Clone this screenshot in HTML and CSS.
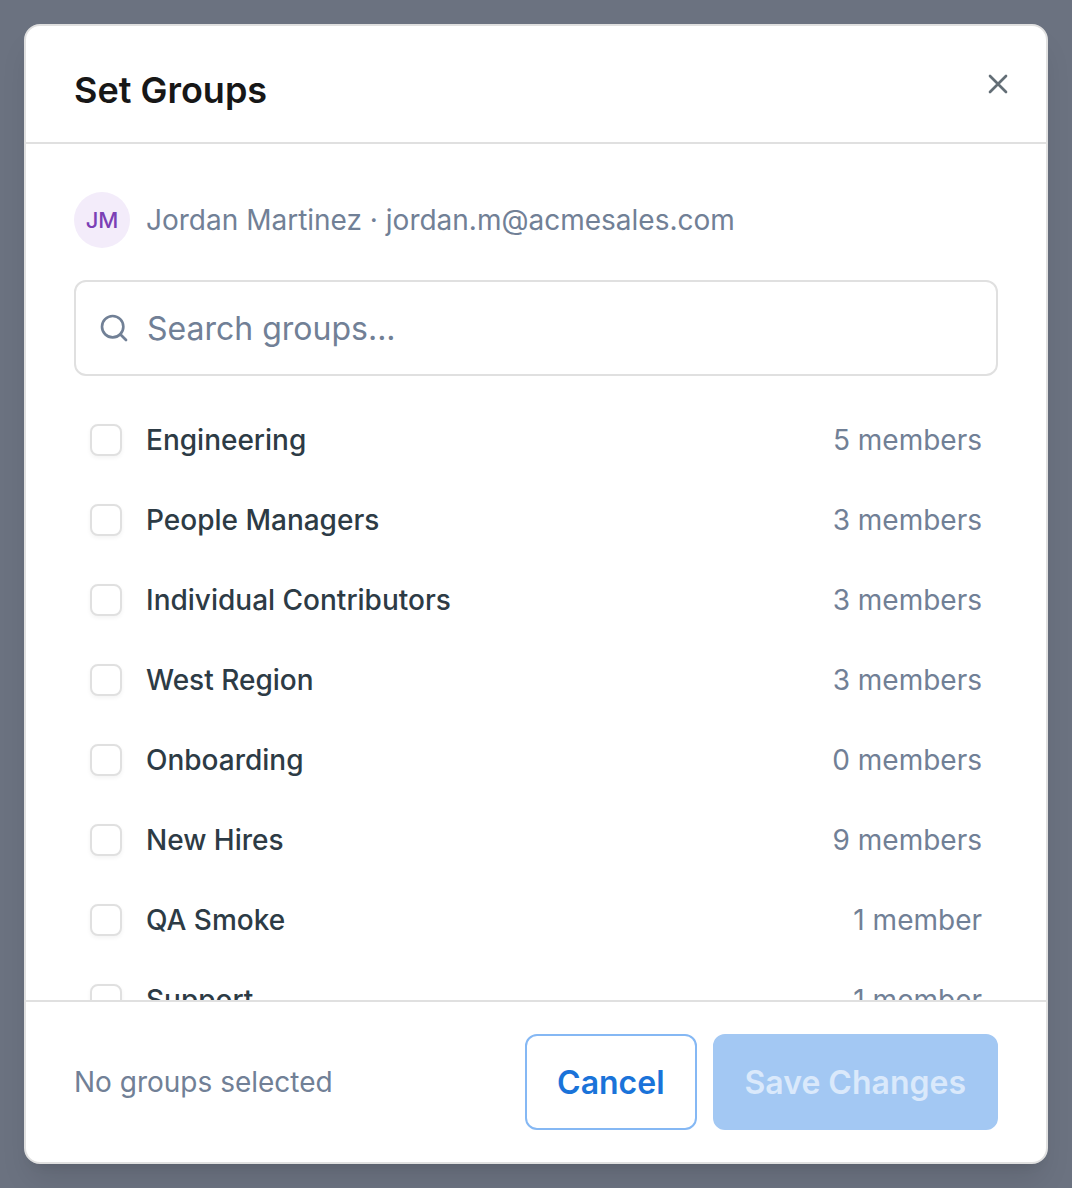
FILE: index.html
```
<!DOCTYPE html>
<html lang="en">
<head>
  <meta charset="UTF-8">
  <meta name="viewport" content="width=device-width, initial-scale=1">
  <title>Set Groups</title>
  <link rel="stylesheet" href="styles.css">
</head>
<body>
  <div class="overlay">
    <form class="modal" role="dialog" aria-labelledby="modal-title">
      <header class="modal-header">
        <h1 class="modal-title" id="modal-title">Set Groups</h1>
        <button class="close-btn" type="button" aria-label="Close">
          <svg class="icon" viewBox="0 0 24 24"><path d="M18 6 6 18M6 6l12 12"/></svg>
        </button>
      </header>

      <div class="modal-body">
        <div class="user">
          <span class="avatar">JM</span>
          <span>Jordan Martinez · jordan.m@acmesales.com</span>
        </div>

        <label class="search">
          <svg class="icon" viewBox="0 0 24 24"><circle cx="11" cy="11" r="8"/><path d="m21 21-4.3-4.3"/></svg>
          <input class="search-input" type="text" placeholder="Search groups..." aria-label="Search groups">
        </label>

        <ul class="groups">
          <li><label class="group"><input class="checkbox" type="checkbox"><span class="group-name">Engineering</span><span>5 members</span></label></li>
          <li><label class="group"><input class="checkbox" type="checkbox"><span class="group-name">People Managers</span><span>3 members</span></label></li>
          <li><label class="group"><input class="checkbox" type="checkbox"><span class="group-name">Individual Contributors</span><span>3 members</span></label></li>
          <li><label class="group"><input class="checkbox" type="checkbox"><span class="group-name">West Region</span><span>3 members</span></label></li>
          <li><label class="group"><input class="checkbox" type="checkbox"><span class="group-name">Onboarding</span><span>0 members</span></label></li>
          <li><label class="group"><input class="checkbox" type="checkbox"><span class="group-name">New Hires</span><span>9 members</span></label></li>
          <li><label class="group"><input class="checkbox" type="checkbox"><span class="group-name">QA Smoke</span><span>1 member</span></label></li>
          <li><label class="group"><input class="checkbox" type="checkbox"><span class="group-name">Support</span><span>1 member</span></label></li>
        </ul>
      </div>

      <footer class="modal-footer">
        <span class="selected">No groups selected</span>
        <button class="btn btn-outline" type="button">Cancel</button>
        <button class="btn btn-primary" type="submit" disabled>Save Changes</button>
      </footer>
    </form>
  </div>
</body>
</html>
```

FILE: styles.css
```
* { box-sizing: border-box; }

body {
  margin: 0;
  font-family: Inter, "Liberation Sans", sans-serif;
  font-size: 28px;
  line-height: 40px;
  color: #718096;
}

.overlay {
  display: flex;
  height: 100vh;
  padding: 24px;
  background: #6b7280;
}

.modal {
  flex: 1;
  min-width: 0;
  display: flex;
  flex-direction: column;
  background: #fff;
  border: 2px solid #e0e0e0;
  border-radius: 16px;
  box-shadow: 0 20px 30px -6px rgba(0, 0, 0, 0.1), 0 8px 12px -8px rgba(0, 0, 0, 0.1);
  overflow: hidden;
}

/* header */
.modal-header {
  display: flex;
  align-items: center;
  justify-content: space-between;
  padding: 32px 32px 32px 48px;
  border-bottom: 2px solid #e0e0e0;
}
.modal-title {
  margin: 0;
  padding: 14px 0 2px;
  font-size: 36px;
  line-height: 36px;
  font-weight: 600;
  color: #171717;
}
.close-btn {
  display: flex;
  padding: 0;
  border: 0;
  background: none;
  color: #636e76;
  cursor: pointer;
}
.icon {
  flex: none;
  width: 32px;
  height: 32px;
  fill: none;
  stroke: currentColor;
  stroke-width: 2;
  stroke-linecap: round;
  stroke-linejoin: round;
}

/* body */
.modal-body {
  flex: 1;
  min-height: 0;
  display: flex;
  flex-direction: column;
  padding: 48px 48px 0;
  overflow: hidden;
}
.user {
  display: flex;
  align-items: center;
  gap: 16px;
  margin-bottom: 32px;
}
.avatar {
  display: flex;
  align-items: center;
  justify-content: center;
  width: 56px;
  height: 56px;
  border-radius: 50%;
  background: #f3ecfa;
  color: #7b3fb5;
  font-size: 22px;
  font-weight: 500;
}
.search {
  flex: none;
  display: flex;
  align-items: center;
  gap: 16px;
  height: 96px;
  padding: 0 22px;
  border: 2px solid #e0e0e0;
  border-radius: 12px;
}
.search-input {
  flex: 1;
  min-width: 0;
  padding: 2px 1px 0;
  border: 0;
  outline: 0;
  background: none;
  font: inherit;
  font-size: 32px;
  color: #2d3748;
}
.search-input::placeholder { color: #718096; opacity: 1; }

.groups {
  flex: 1;
  min-height: 0;
  margin: 24px 0 0;
  padding: 0;
  list-style: none;
  overflow: hidden;
}
.group {
  display: flex;
  align-items: center;
  gap: 24px;
  padding: 20px 16px;
  cursor: pointer;
}
.group-name {
  flex: 1;
  font-weight: 500;
  color: #2d3b45;
}
.checkbox {
  appearance: none;
  flex: none;
  width: 32px;
  height: 32px;
  margin: 0;
  border: 2px solid #e0e0e0;
  border-radius: 8px;
  background: #fff;
  box-shadow: 0 2px 4px rgba(0, 0, 0, 0.05);
}
.checkbox:checked { background: #1a73d9; border-color: #1a73d9; }

/* footer */
.modal-footer {
  display: flex;
  align-items: center;
  gap: 16px;
  padding: 32px 48px;
  border-top: 2px solid #e0e0e0;
}
.selected { flex: 1; }
.btn {
  height: 96px;
  padding: 2px 30px 0;
  border: 2px solid transparent;
  border-radius: 12px;
  font: inherit;
  font-size: 32px;
  font-weight: 600;
  cursor: pointer;
}
.btn-outline {
  background: #fff;
  border-color: #85b8f4;
  color: #1a73d9;
}
.btn-primary {
  background: #a3c8f3;
  border-color: #a3c8f3;
  color: #dae9fb;
}
```
